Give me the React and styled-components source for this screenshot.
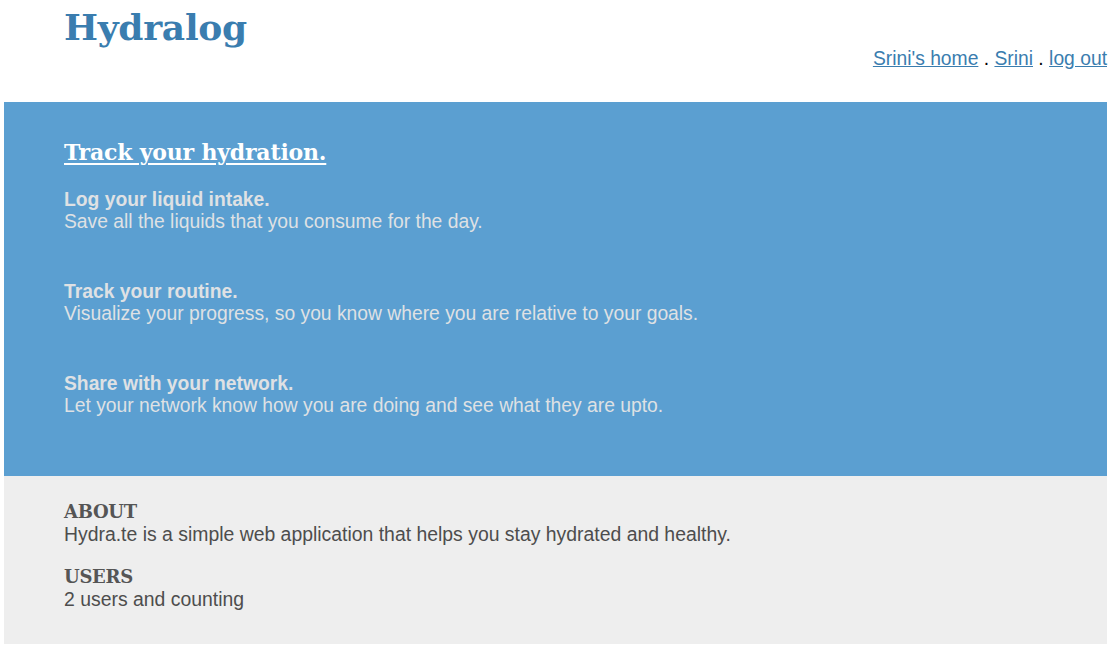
import styled, { createGlobalStyle } from 'styled-components';

const GlobalStyle = createGlobalStyle`
  html, body {
    margin: 0;
    padding: 0;
    background: #ffffff;
  }
  body {
    padding: 0 4px;
    font-family: 'Liberation Sans', Arial, sans-serif;
  }
`

const StyledHeader = styled.header`
  display: flex;
  justify-content: space-between;
  align-items: flex-start;
  height: 102px;
  padding: 0 0 0 60px;
`
const StyledLogo = styled.h1`
  margin: 4px 0 0;
  font-family: 'DejaVu Serif', Georgia, serif;
  font-weight: 700;
  font-size: 36px;
  line-height: 46px;
  letter-spacing: -0.3px;
  color: #3a7daf;
`
const StyledNav = styled.nav`
  margin: 47px 0 0;
  font-size: 19.3px;
  line-height: 24px;
  color: #000;
  white-space: nowrap;
`
const StyledNavLink = styled.a`
  color: #3a7daf;
  text-decoration: underline;
`
const StyledHero = styled.section`
  background: #5b9fd1;
  height: 374px;
  box-sizing: border-box;
  padding: 36px 60px 0;
`
const StyledHeroTitle = styled.h2`
  margin: 0 0 23px;
  font-family: 'DejaVu Serif', Georgia, serif;
  font-weight: 700;
  font-size: 22px;
  line-height: 28px;
  letter-spacing: -0.2px;
  color: #ffffff;
  text-decoration: underline;
  text-underline-offset: 3px;
`
const StyledFeature = styled.div`
  margin: 0 0 48px;
  font-size: 19.3px;
  line-height: 22px;
  color: #dfe1e4;
`
const StyledFeatureName = styled.div`
  font-weight: 700;
`
const StyledFooter = styled.section`
  background: #eeeeee;
  height: 168px;
  box-sizing: border-box;
  padding: 25px 60px 0;
  color: #4d4d4d;
`
const StyledFooterBlock = styled.div`
  margin: 0 0 21px;
`
const StyledFooterTitle = styled.h3`
  margin: 0;
  font-family: 'DejaVu Serif', Georgia, serif;
  font-weight: 700;
  font-size: 18px;
  line-height: 22px;
  letter-spacing: -0.3px;
  color: #555555;
`
const StyledFooterText = styled.p`
  margin: 0;
  font-size: 19.4px;
  line-height: 22px;
`

const features = [
  ['Log your liquid intake.', 'Save all the liquids that you consume for the day.'],
  ['Track your routine.', 'Visualize your progress, so you know where you are relative to your goals.'],
  ['Share with your network.', 'Let your network know how you are doing and see what they are upto.'],
];

const App = () => {
  return (
    <>
      <GlobalStyle />
      <StyledHeader>
        <StyledLogo>Hydralog</StyledLogo>
        <StyledNav>
          <StyledNavLink href="#">Srini's home</StyledNavLink> . <StyledNavLink href="#">Srini</StyledNavLink> . <StyledNavLink href="#">log out</StyledNavLink>
        </StyledNav>
      </StyledHeader>
      <StyledHero>
        <StyledHeroTitle>Track your hydration.</StyledHeroTitle>
        {features.map(([name, text]) => (
          <StyledFeature key={name}>
            <StyledFeatureName>{name}</StyledFeatureName>
            <div>{text}</div>
          </StyledFeature>
        ))}
      </StyledHero>
      <StyledFooter>
        <StyledFooterBlock>
          <StyledFooterTitle>ABOUT</StyledFooterTitle>
          <StyledFooterText>Hydra.te is a simple web application that helps you stay hydrated and healthy.</StyledFooterText>
        </StyledFooterBlock>
        <StyledFooterBlock>
          <StyledFooterTitle>USERS</StyledFooterTitle>
          <StyledFooterText>2 users and counting</StyledFooterText>
        </StyledFooterBlock>
      </StyledFooter>
    </>
  );
};

export default App;
